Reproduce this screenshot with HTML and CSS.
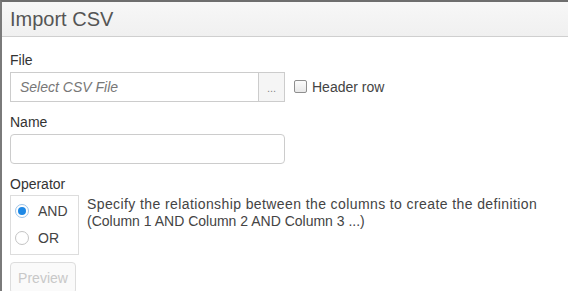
FILE: index.html
```html
<!DOCTYPE html>
<html lang="en">
<head>
    <meta charset="UTF-8">
    <title>Import CSV</title>
    <link rel="stylesheet" href="styles.css">
</head>
<body>
    <div class="dialog">
        <div class="dialog-header">Import CSV</div>
        <div class="dialog-body">
            <div class="field">
                <label class="field-label">File</label>
                <div class="file-row">
                    <div class="file-group">
                        <div class="file-input">Select CSV File</div>
                        <div class="file-btn">...</div>
                    </div>
                    <label class="check">
                        <span class="checkbox"></span>
                        Header row
                    </label>
                </div>
            </div>
            <div class="field">
                <label class="field-label">Name</label>
                <div class="text-input"></div>
            </div>
            <div class="field">
                <label class="field-label">Operator</label>
                <div class="operator-row">
                    <div class="radio-box">
                        <div class="radio-item"><span class="radio checked"></span>AND</div>
                        <div class="radio-item"><span class="radio"></span>OR</div>
                    </div>
                    <p class="help"><span class="help-lead">Specify the relationship between the columns to create the definition</span><br>(Column 1 AND Column 2 AND Column 3 ...)</p>
                </div>
            </div>
            <button class="preview-btn" disabled>Preview</button>
        </div>
    </div>
</body>
</html>
```

FILE: styles.css
```css
html,
body {
    margin: 0;
    padding: 0;
    height: 100%;
    background: #fff;
    overflow: hidden;
}

.dialog {
    height: 100%;
    border-top: 2px solid #6e6e6e;
    border-left: 2px solid #7a7a7a;
    box-sizing: border-box;
    font-family: "Liberation Sans", Arial, sans-serif;
    font-size: 14px;
    color: #333;
}

/* 标题栏 */
.dialog-header {
    height: 34px;
    line-height: 34px;
    padding-left: 8px;
    font-size: 20px;
    color: #555;
    background: linear-gradient(#f7f7f7, #f0f0f0);
    border-bottom: 1px solid #cfcfcf;
}

.dialog-body {
    padding: 14px 8px 0;
}

.field {
    margin-bottom: 11px;
}

.field-label {
    display: block;
    line-height: 18px;
    margin-bottom: 3px;
}

/* 文件选择 */
.file-row {
    display: flex;
    align-items: center;
}

.file-group {
    display: flex;
    width: 275px;
    height: 30px;
}

.file-input {
    flex: 1;
    border: 1px solid #ccc;
    border-right: none;
    font-style: italic;
    color: #777;
    line-height: 28px;
    padding-left: 9px;
}

.file-btn {
    width: 25px;
    border: 1px solid #ccc;
    background: #f5f5f5;
    color: #888;
    font-size: 11px;
    text-align: center;
    line-height: 30px;
}

.check {
    display: flex;
    align-items: center;
    margin-left: 9px;
    color: #444;
    margin-top: -1px;
}

.checkbox {
    width: 11px;
    height: 11px;
    border: 1px solid #8f8f8f;
    border-radius: 2px;
    background: linear-gradient(#fcfcfc, #e8e8e8);
    margin-right: 5px;
}

.text-input {
    width: 273px;
    height: 28px;
    border: 1px solid #ccc;
    border-radius: 4px;
}

/* 运算符 */
.operator-row {
    display: flex;
    align-items: flex-start;
}

.radio-box {
    width: 67px;
    height: 57px;
    border: 1px solid #ddd;
    padding-top: 1px;
    box-sizing: content-box;
    margin-top: -1px;
}

.radio-item {
    display: flex;
    align-items: center;
    height: 27px;
    padding-left: 4px;
    color: #444;
}

.radio {
    width: 14px;
    height: 14px;
    border: 1px solid #c4c4c4;
    border-radius: 50%;
    margin-right: 9px;
    box-sizing: border-box;
    background: #fff;
    position: relative;
}

.radio.checked {
    border-color: #9ec4e8;
}

.radio.checked::after {
    content: "";
    position: absolute;
    left: 2px;
    top: 2px;
    width: 8px;
    height: 8px;
    border-radius: 50%;
    background: #1e88e5;
}

.help {
    margin: 0 0 0 8px;
    line-height: 17px;
    color: #444;
}

.help-lead {
    letter-spacing: 0.4px;
}

.preview-btn {
    margin-top: -4px;
    width: 66px;
    height: 32px;
    border: 1px solid #ddd;
    border-radius: 4px;
    background: #fafafa;
    color: #c8c8c8;
    font-family: "Liberation Sans", Arial, sans-serif;
    font-size: 14px;
}
```
